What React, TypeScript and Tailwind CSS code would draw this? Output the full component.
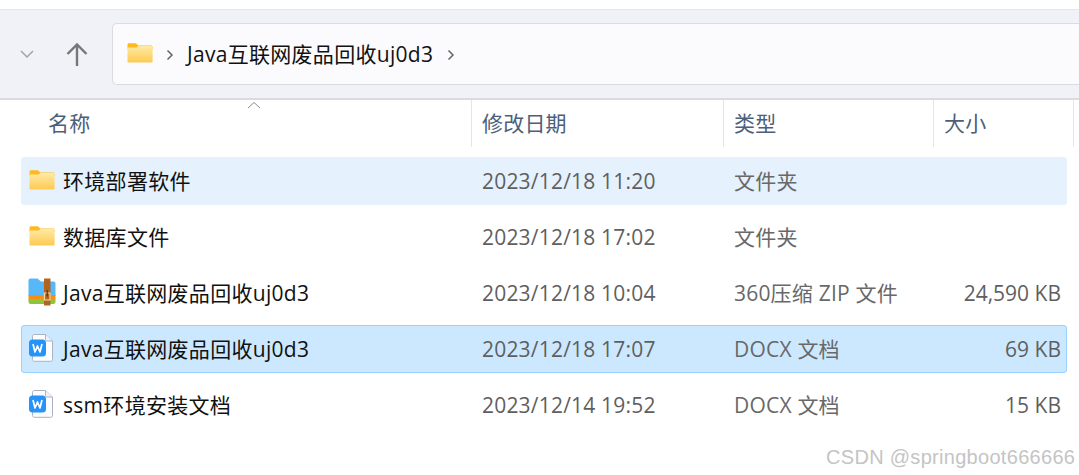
import { useId } from 'react';

const cjk = "font-['Open_Sans','Noto_Sans_CJK_SC',sans-serif]";

function FolderIcon({ className = '' }: { className?: string }) {
  const id = useId();
  return (
    <svg width="26" height="20" viewBox="0 0 26 20" className={className}>
      <defs>
        <linearGradient id={id} x1="0" y1="0" x2="0" y2="1">
          <stop offset="0" stopColor="#ffeaa6" />
          <stop offset="1" stopColor="#fdca4f" />
        </linearGradient>
      </defs>
      <path d="M0.5 2C0.5 0.9 1.2 0.3 2.2 0.3H8C9 0.3 9.6 0.8 10.3 1.6L11 2.4H24C25 2.4 25.6 3 25.6 4V6H0.5Z" fill="#fdb91f" />
      <path d="M0.5 18.4V5.6C0.5 4.9 1 4.6 1.6 4.6H9.5L11.4 2.9H24.4C25.2 2.9 25.6 3.4 25.6 4.1V18.4C25.6 19.1 25.1 19.6 24.4 19.6H1.6C1 19.6 0.5 19.1 0.5 18.4Z" fill={`url(#${id})`} />
    </svg>
  );
}

function ZipIcon() {
  return (
    <svg width="28" height="28" viewBox="0 0 28 28">
      <path d="M0.5 2.5C0.5 1.4 1.3 0.5 2.4 0.5H9.500L13 3.500H25.500C26.600 3.500 27.500 4.400 27.500 5.500V18H0.500Z" fill="#56b8f6" />
      <path d="M0.500 17H27.500V21.500H0.500Z" fill="#fb8c12" />
      <path d="M0.500 21H27.500V24C27.500 25.100 26.600 26 25.500 26H2.500C1.400 26 0.500 25.100 0.500 24Z" fill="#8cc63f" />
      <path d="M16 0.500H22.500V27.500H16Z" fill="#b0661f" />
      <path d="M16.500 15H22V22H16.500Z" fill="none" stroke="#f3d9a8" strokeWidth="1.200" />
      <path d="M19.200 12V18.500" stroke="#5f3410" strokeWidth="1.200" />
    </svg>
  );
}

function WordIcon() {
  return (
    <svg width="26" height="28" viewBox="0 0 26 28">
      <path d="M4.500 2.300C4.500 1.300 5.200 0.500 6.200 0.500H17.500L24.500 7V25.500C24.500 26.500 23.800 27.300 22.800 27.300H6.200C5.200 27.300 4.500 26.500 4.500 25.500Z" fill="#fdfdfe" stroke="#a9b2c2" />
      <path d="M17.500 0.500V5.400C17.500 6.300 18.200 7 19.100 7H24.500" fill="#eef1f6" stroke="#a9b2c2" />
      <rect x="1" y="5.500" width="17" height="17" rx="3.500" fill="#2593fa" />
      <path d="M5 10L7 18L9.500 12L12 18L14 10" fill="none" stroke="#ffffff" strokeWidth="1.700" strokeLinejoin="round" />
    </svg>
  );
}

const rows = [
  { icon: <FolderIcon className="ml-[1px]" />, name: '环境部署软件', date: '2023/12/18 11:20', type: '文件夹', size: '', tone: 'hover' },
  { icon: <FolderIcon className="ml-[1px]" />, name: '数据库文件', date: '2023/12/18 17:02', type: '文件夹', size: '', tone: '' },
  { icon: <ZipIcon />, name: 'Java互联网废品回收uj0d3', date: '2023/12/18 10:04', type: '360压缩 ZIP 文件', size: '24,590 KB', tone: '' },
  { icon: <WordIcon />, name: 'Java互联网废品回收uj0d3', date: '2023/12/18 17:07', type: 'DOCX 文档', size: '69 KB', tone: 'selected' },
  { icon: <WordIcon />, name: 'ssm环境安装文档', date: '2023/12/14 19:52', type: 'DOCX 文档', size: '15 KB', tone: '' },
];

export default function App() {
  return (
    <div className={`relative w-[1079px] h-[475px] bg-white overflow-hidden tracking-[0.2px] ${cjk}`}>
      <div className="h-[9px] bg-white" />

      {/* toolbar */}
      <div className="h-[91px] bg-[#f1f2f7] border-t border-t-[#e6e6e8] border-b-2 border-b-[#dbdbde] flex items-start">
        <svg width="16" height="10" viewBox="0 0 16 10" className="ml-[19px] mt-[39px]">
          <path d="M2 2L8 8L14 2" fill="none" stroke="#a3a3a6" strokeWidth="1.500" />
        </svg>
        <svg width="24" height="26" viewBox="0 0 24 26" className="ml-[30px] mt-[32px]">
          <path d="M12 24V3M2.500 12L12 2.500L21.500 12" fill="none" stroke="#77777a" strokeWidth="2.400" />
        </svg>
        <div className="ml-[23px] mt-[13px] h-[62px] flex-1 flex items-center bg-[#fbfbfd] border border-[#dcdcdf] rounded-l-[5px] border-r-0">
          <FolderIcon className="ml-[14px] mt-[-3px]" />
          <svg width="8" height="12" viewBox="0 0 8 12" className="ml-[13px] mt-[2px]">
            <path d="M1.500 1.500L6 6L1.500 10.500" fill="none" stroke="#66666a" strokeWidth="1.500" />
          </svg>
          <span className="ml-[13px] text-[21px] leading-[28px] tracking-[0.3px] text-[#111111] whitespace-nowrap">Java互联网废品回收uj0d3</span>
          <svg width="8" height="12" viewBox="0 0 8 12" className="ml-[14px] mt-[2px]">
            <path d="M1.500 1.500L6 6L1.500 10.500" fill="none" stroke="#66666a" strokeWidth="1.500" />
          </svg>
        </div>
      </div>

      {/* column headers */}
      <div className="relative h-[47px] flex text-[21px] text-[#4c607a]">
        <svg width="14" height="8" viewBox="0 0 14 8" className="absolute left-[247px] top-[1px]">
          <path d="M1 7L7 1.500L13 7" fill="none" stroke="#8b8b8e" strokeWidth="1" />
        </svg>
        <div className="w-[472px] pl-[48px] flex items-center border-r border-[#e5e5e5]">名称</div>
        <div className="w-[252px] pl-[10px] flex items-center border-r border-[#e5e5e5]">修改日期</div>
        <div className="w-[210px] pl-[10px] flex items-center border-r border-[#e5e5e5]">类型</div>
        <div className="w-[140px] pl-[10px] flex items-center border-r border-[#e5e5e5]">大小</div>
      </div>

      {/* file list */}
      <div className="ml-[21px] w-[1046px] mt-[10px] flex flex-col gap-[8px]">
        {rows.map((row) => (
          <div
            key={row.date}
            className={`h-[48px] flex items-center rounded-[3px] text-[21px] border ${
              row.tone === 'selected'
                ? 'bg-[#cce8ff] border-[#99d1ff]'
                : row.tone === 'hover'
                  ? 'bg-[#e5f1fd] border-[#e5f1fd]'
                  : 'border-transparent'
            }`}
          >
            <div className="w-[460px] pl-[6px] flex items-center">
              <div className="w-[35px] flex items-center mt-[-2px]">{row.icon}</div>
              <span className="text-[#111111] tracking-[0.3px] whitespace-nowrap mt-[2px]">{row.name}</span>
            </div>
            <div className="w-[252px] text-[#5f5f5f] whitespace-nowrap mt-[2px]">{row.date}</div>
            <div className="w-[220px] text-[#686868] whitespace-nowrap mt-[2px]">{row.type}</div>
            <div className="flex-1 pr-[5px] text-right text-[#5f5f5f] tracking-[0px] whitespace-nowrap mt-[2px]">{row.size}</div>
          </div>
        ))}
      </div>

      {/* watermark */}
      <div className="absolute left-[826px] top-[443px] text-[20px] leading-[28px] tracking-[0.3px] text-[#c4c4c4] font-['Liberation_Sans',sans-serif] whitespace-nowrap">
        CSDN @springboot666666
      </div>
    </div>
  );
}
